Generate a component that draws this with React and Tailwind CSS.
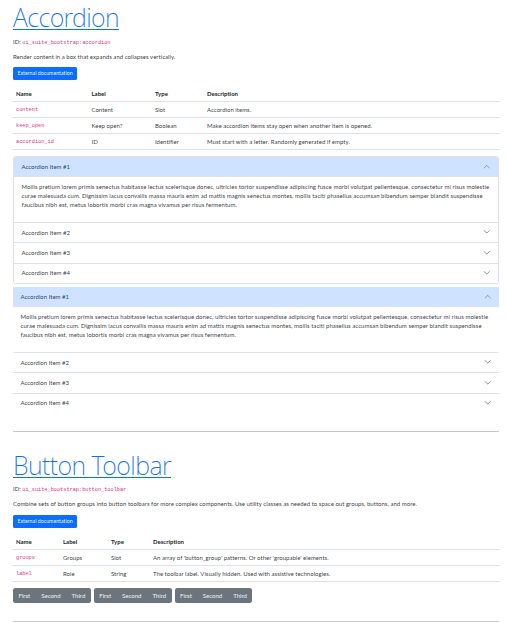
import React from "react";

const LOREM = [
  "Mollis pretium lorem primis senectus habitasse lectus scelerisque donec, ultricies tortor suspendisse adipiscing fusce morbi volutpat pellentesque, consectetur mi risus molestie",
  "curae malesuada cum. Dignissim lacus convallis massa mauris enim ad mattis magnis senectus montes, mollis taciti phasellus accumsan bibendum semper blandit suspendisse",
  "faucibus nibh est, metus lobortis morbi cras magna vivamus per risus fermentum.",
];

function Chevron({ up }) {
  return (
    <svg viewBox="0 0 16 16" className={"size-[7.5px] shrink-0 " + (up ? "rotate-180 text-[#052c65]/60" : "text-[#212529]/80")} fill="currentColor">
      <path fillRule="evenodd" d="M1.646 4.646a.5.5 0 0 1 .708 0L8 10.293l5.646-5.647a.5.5 0 0 1 .708.708l-6 6a.5.5 0 0 1-.708 0l-6-6a.5.5 0 0 1 0-.708z" />
    </svg>
  );
}

function Accordion({ flush }) {
  return (
    <div className={flush ? "mt-[3px] h-[124px]" : "mt-[6px] h-[128px] overflow-hidden rounded-[2.5px] border border-[#dee2e6]"}>
      <div className={"flex items-center justify-between border-b border-[#dee2e6] bg-[#cfe2ff] px-[7.5px] text-[#052c65]/90 " + (flush ? "h-5" : "h-5")}>
        <span>Accordion Item #1</span>
        <Chevron up />
      </div>
      <div className="h-[45px] px-[7.5px] pt-[5px] leading-[9px] tracking-[0.047px] whitespace-nowrap">
        {LOREM.map((line) => <p key={line}>{line}</p>)}
      </div>
      {[2, 3, 4].map((n) => (
        <div key={n} className="flex h-[20.4px] items-center justify-between border-t border-[#dee2e6] px-[7.5px] pb-[1.2px]">
          <span>Accordion Item #{n}</span>
          <Chevron />
        </div>
      ))}
    </div>
  );
}

function Section({ title, titleClass, id, description, cols, rows, children }) {
  return (
    <section>
      <h2 className={"h-[36px] font-['Noto_Sans',sans-serif] font-extralight leading-[34px] whitespace-nowrap text-[#0d6efd] underline decoration-1 underline-offset-2 " + titleClass}>{title}</h2>
      <p className="mt-[0.5px] h-[9px] leading-[9px]">
        ID: <code className="font-['Liberation_Mono',monospace] text-[5.25px] text-[#d63384]">{id}</code>
      </p>
      <p className="mt-[6px] h-[9px] leading-[9px] tracking-[0.025px] whitespace-nowrap">{description}</p>
      <button className="mt-[6.5px] flex h-[13px] w-16 items-center justify-center rounded-[1.5px] bg-[#0d6efd] pt-px text-[5.25px] text-white/95">External documentation</button>
      <div className="mt-[6px]">
        <div className={"grid h-4 items-center border-b border-[#dee2e6] pl-[3px] font-bold text-[#212529] " + cols}>
          <span>Name</span><span>Label</span><span>Type</span><span>Description</span>
        </div>
        {rows.map((r) => (
          <div key={r[0]} className={"grid h-4 items-center border-b border-[#dee2e6] pl-[3px] whitespace-nowrap " + cols}>
            <code className="pt-[2px] font-['Liberation_Mono',monospace] text-[5.25px] leading-[9px] text-[#d63384]">{r[0]}</code>
            <span>{r[1]}</span><span>{r[2]}</span><span className="tracking-[0.02px]">{r[3]}</span>
          </div>
        ))}
      </div>
      {children}
    </section>
  );
}

export default function App() {
  return (
    <main className="h-[623px] overflow-hidden bg-white pr-2 pl-[13px] font-['Lato',sans-serif] text-[6px] text-[#212529]/90 [font-variant-ligatures:none]">
      <Section
        title="Accordion"
        titleClass="text-[25px] tracking-[-0.6px]"
        id="ui_suite_bootstrap:accordion"
        description="Render content in a box that expands and collapses vertically."
        cols="grid-cols-[75.5px_63.5px_52px_1fr]"
        rows={[
          ["content", "Content", "Slot", "Accordion items."],
          ["keep_open", "Keep open?", "Boolean", "Make accordion items stay open when another item is opened."],
          ["accordion_id", "ID", "Identifier", "Must start with a letter. Randomly generated if empty."],
        ]}
      >
        <Accordion />
        <Accordion flush />
      </Section>
      <hr className="mt-5 mb-[15.5px] border-t border-[#c8c9ca]" />
      <Section
        title="Button Toolbar"
        titleClass="text-[25px] tracking-[-0.5px]"
        id="ui_suite_bootstrap:button_toolbar"
        description="Combine sets of button groups into button toolbars for more complex components. Use utility classes as needed to space out groups, buttons, and more."
        cols="grid-cols-[47px_48px_42px_1fr]"
        rows={[
          ["groups", "Groups", "Slot", "An array of 'button_group' patterns. Or other 'groupable' elements."],
          ["label", "Role", "String", "The toolbar label. Visually hidden. Used with assistive technologies."],
        ]}
      >
        <div className="mt-[6px] flex h-[15px] gap-[3px]">
          {[0, 1, 2].map((n) => (
            <div key={n} className="flex w-[77.8px] items-center justify-between rounded-[2.25px] bg-[#6c757d] px-[5.5px] text-white/90">
              <span>First</span><span>Second</span><span>Third</span>
            </div>
          ))}
        </div>
      </Section>
      <hr className="mt-[18px] border-t border-[#c8c9ca]" />
    </main>
  );
}
